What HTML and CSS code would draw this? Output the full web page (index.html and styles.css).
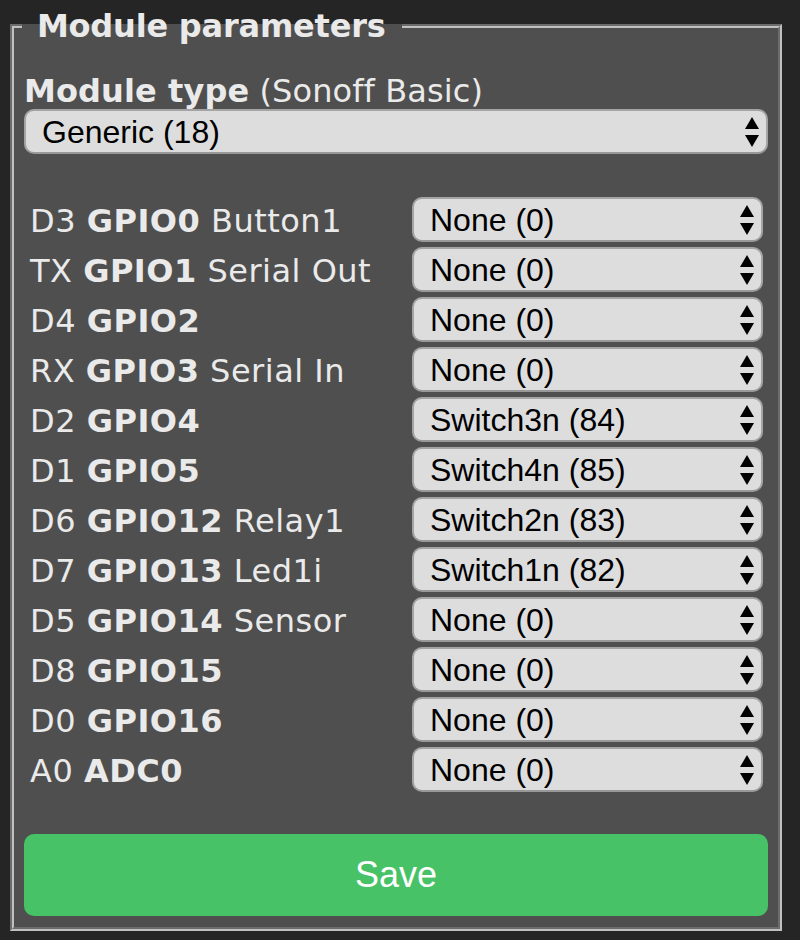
FILE: index.html
```html
<!DOCTYPE html>
<html lang="en">
<head>
<meta charset="utf-8">
<title>Module parameters</title>
<link rel="stylesheet" href="styles.css">
</head>
<body>
<form class="page">
  <fieldset class="panel">
    <legend class="panel-title">&nbsp;Module parameters&nbsp;</legend>
    <div class="module-label"><b>Module type</b> (Sonoff Basic)</div>
    <div class="sel sel-wide">
      <select class="select"><option>Generic (18)</option></select>
    </div>
    <div class="pins">
      <div class="pin-label">D3 <b>GPIO0</b> Button1</div>
      <div class="sel"><select class="select"><option>None (0)</option></select></div>
      <div class="pin-label">TX <b>GPIO1</b> Serial Out</div>
      <div class="sel"><select class="select"><option>None (0)</option></select></div>
      <div class="pin-label">D4 <b>GPIO2</b></div>
      <div class="sel"><select class="select"><option>None (0)</option></select></div>
      <div class="pin-label">RX <b>GPIO3</b> Serial In</div>
      <div class="sel"><select class="select"><option>None (0)</option></select></div>
      <div class="pin-label">D2 <b>GPIO4</b></div>
      <div class="sel"><select class="select"><option>Switch3n (84)</option></select></div>
      <div class="pin-label">D1 <b>GPIO5</b></div>
      <div class="sel"><select class="select"><option>Switch4n (85)</option></select></div>
      <div class="pin-label">D6 <b>GPIO12</b> Relay1</div>
      <div class="sel"><select class="select"><option>Switch2n (83)</option></select></div>
      <div class="pin-label">D7 <b>GPIO13</b> Led1i</div>
      <div class="sel"><select class="select"><option>Switch1n (82)</option></select></div>
      <div class="pin-label">D5 <b>GPIO14</b> Sensor</div>
      <div class="sel"><select class="select"><option>None (0)</option></select></div>
      <div class="pin-label">D8 <b>GPIO15</b></div>
      <div class="sel"><select class="select"><option>None (0)</option></select></div>
      <div class="pin-label">D0 <b>GPIO16</b></div>
      <div class="sel"><select class="select"><option>None (0)</option></select></div>
      <div class="pin-label">A0 <b>ADC0</b></div>
      <div class="sel"><select class="select"><option>None (0)</option></select></div>
    </div>
    <button type="button" class="save">Save</button>
  </fieldset>
</form>
</body>
</html>
```

FILE: styles.css
```css
html, body {
  margin: 0;
  padding: 0;
  background: #252525;
}

body {
  font-family: "DejaVu Sans", Verdana, sans-serif;
  font-size: 32px;
  color: #eaeaea;
}

.page {
  padding: 7px 18px 10px 10px;
}

.panel {
  margin: 0;
  background: #4f4f4f;
  border: 4px groove #c0c0c0;
  padding: 28px 10px 11px 10px;
  min-height: 0;
}

.panel-title {
  margin-left: -2px;
  padding: 0 5px 0 4px;
  font-weight: bold;
  letter-spacing: -0.2px;
  color: #eaeaea;
}

.module-label {
  line-height: 37px;
  margin-bottom: -1px;
  letter-spacing: 0.1px;
}

.sel {
  position: relative;
}

.sel::before,
.sel::after {
  content: "";
  position: absolute;
  right: 9px;
  width: 0;
  height: 0;
  border-left: 7px solid transparent;
  border-right: 7px solid transparent;
  pointer-events: none;
}

.sel::before {
  top: 8px;
  border-bottom: 12px solid #000;
}

.sel::after {
  top: 26px;
  border-top: 12px solid #000;
}

.select {
  display: block;
  width: 100%;
  height: 45px;
  box-sizing: border-box;
  -webkit-appearance: none;
  appearance: none;
  background: #dddddd;
  color: #000;
  border: 2px solid #a4a4a4;
  border-bottom-color: #999;
  border-radius: 10px;
  padding: 0 40px 0 16px;
  font-family: "Liberation Sans", Arial, Helvetica, sans-serif;
  font-size: 32px;
  margin: 0;
}

.pins {
  display: grid;
  grid-template-columns: 388px 351px;
  row-gap: 5px;
  align-items: center;
  margin-top: 43px;
}

.pin-label {
  padding-left: 6px;
  padding-top: 3px;
  line-height: 37px;
  letter-spacing: 0.5px;
  white-space: nowrap;
}

.save {
  display: block;
  width: 100%;
  height: 82px;
  margin-top: 42px;
  border: 0;
  border-radius: 10px;
  background: #47c266;
  color: #fff;
  font-family: "Liberation Sans", Arial, Helvetica, sans-serif;
  font-size: 36px;
  cursor: pointer;
}
```
